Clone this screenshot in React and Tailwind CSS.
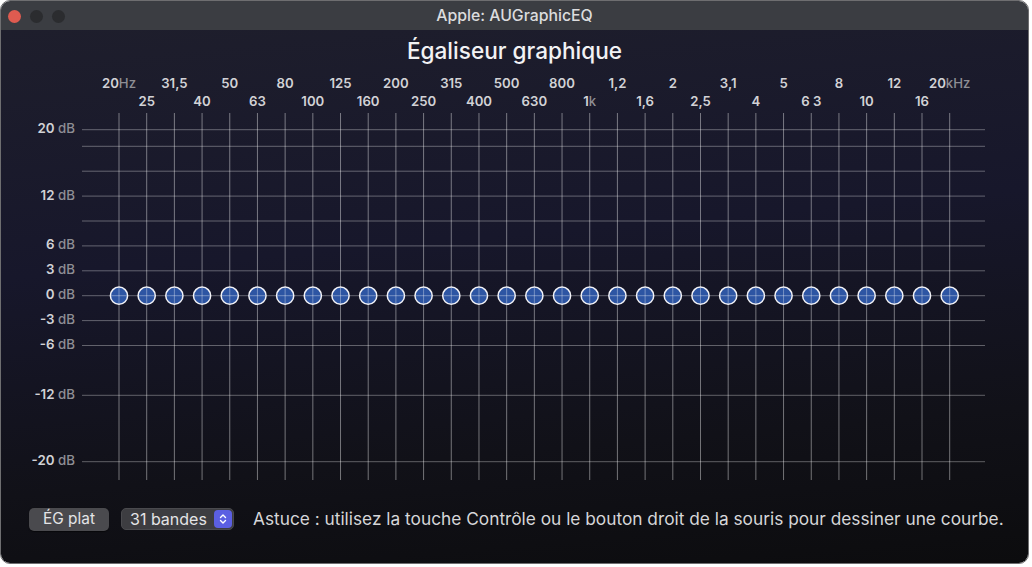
import React from "react";

const FREQS = ["20","25","31,5","40","50","63","80","100","125","160","200","250","315","400","500","630","800","1","1,2","1,6","2","2,5","3,1","4","5","6 3","8","10","12","16","20"];
const DBS = [20, 18, 15, 12, 9, 6, 3, 0, -3, -6, -12, -20];
const LABELED = { 20: "20", 12: "12", 6: "6", 3: "3", 0: "0", "-3": "-3", "-6": "-6", "-12": "-12", "-20": "-20" };

const X0 = 118;
const DX = 27.69;
const OY = 66;
const yOf = (db) => 295.7 - db * 8.3 - OY;

function Graph() {
  const xs = FREQS.map((_, i) => X0 + i * DX);
  return (
    <svg width="1027" height="424" className="block" style={{ fontFamily: "Inter, 'Noto Sans', sans-serif" }}>
      {DBS.map((d) => (
        <line key={"h" + d} x1="81" x2="984" y1={yOf(d)} y2={yOf(d)} stroke="rgba(255,255,255,0.33)" strokeWidth="1" />
      ))}
      {xs.map((x, i) => (
        <line key={"v" + i} x1={x} x2={x} y1="47" y2="414" stroke="rgba(255,255,255,0.42)" strokeWidth="1" />
      ))}
      {FREQS.map((f, i) => {
        const top = i % 2 === 0;
        const unit = i === 0 ? "Hz" : i === 17 ? "k" : i === 30 ? "kHz" : null;
        return (
          <text key={"f" + i} x={xs[i]} y={top ? 22.3 : 39.7} textAnchor="middle" fontSize="13.2" fontWeight="600" fill="#d2d2d6">
            {f}
            {unit && <tspan fill="#8e8e94" fontWeight="500">{unit}</tspan>}
          </text>
        );
      })}
      {DBS.filter((d) => LABELED[d] !== undefined).map((d) => (
        <text key={"d" + d} x="74" y={yOf(d) + 3.4} textAnchor="end" fontSize="13.3" fontWeight="600" fill="#d2d2d6">
          {LABELED[d]}
          <tspan fill="#8e8e94" fontWeight="500">{" dB"}</tspan>
        </text>
      ))}
      {xs.map((x, i) => (
        <g key={"k" + i}>
          <circle cx={x} cy={yOf(0)} r="8.6" fill="#2d55a3" stroke="#f2f2f6" strokeWidth="1.5" />
          <line x1={x - 7.8} x2={x + 7.8} y1={yOf(0)} y2={yOf(0)} stroke="rgba(255,255,255,0.35)" strokeWidth="1" />
          <line x1={x} x2={x} y1={yOf(0) - 7.8} y2={yOf(0) + 7.8} stroke="rgba(255,255,255,0.35)" strokeWidth="1" />
        </g>
      ))}
    </svg>
  );
}

export default function App() {
  return (
    <div className="w-[1032px] h-[567px] bg-white" style={{ fontFamily: "Inter, 'Noto Sans', sans-serif" }}>
      <div className="w-[1029px] h-[564px] rounded-[10px] border border-[#6e6e70] overflow-hidden flex flex-col">
        <div className="h-[29px] bg-[#3b3d42] relative flex items-center justify-center shrink-0">
          <div className="absolute left-[7px] top-[9px] flex gap-[9px]">
            <span className="w-[13px] h-[13px] rounded-full bg-[#df5b50]" />
            <span className="w-[13px] h-[13px] rounded-full bg-[#2b2c2f]" />
            <span className="w-[13px] h-[13px] rounded-full bg-[#2b2c2f]" />
          </div>
          <span className="text-[15.8px] text-[#dcdcde] font-medium">Apple: AUGraphicEQ</span>
        </div>
        <div className="flex-1 flex flex-col bg-[linear-gradient(175deg,#1e1e2c_0%,#17172b_40%,#111118_75%,#0c0c0e_100%)]">
          <div className="pt-[6px] h-[36px] leading-[30px] text-center text-[22.6px] font-medium text-[#f2f2f4]">Égaliseur graphique</div>
          <Graph />
          <div className="mt-[17px] h-[24px] flex items-center pl-[28px]">
            <div className="w-[80px] h-[23px] rounded-[5px] bg-[#4a4a4e] flex items-center justify-center text-[15.4px] text-[#e4e4e6] shadow-[0_0.5px_1px_rgba(0,0,0,0.5)]">ÉG plat</div>
            <div className="ml-[12px] w-[113px] h-[22px] rounded-[5px] bg-[#3d3d41] border border-[#4a4a4e] flex items-center justify-between pl-[8px] pr-[1px] text-[16px] text-[#e4e4e6]">
              <span>31 bandes</span>
              <span className="w-[18px] h-[18px] rounded-[4px] bg-[#5b5fe2] flex items-center justify-center">
                <svg width="8" height="12" viewBox="0 0 8 12" fill="none" stroke="white" strokeWidth="1.4" strokeLinecap="round" strokeLinejoin="round">
                  <path d="M1.5 4.5 L4 2 L6.5 4.5" />
                  <path d="M1.5 7.5 L4 10 L6.5 7.5" />
                </svg>
              </span>
            </div>
            <div className="ml-[19px] text-[17.3px] text-[#d6d6d8] whitespace-nowrap">Astuce : utilisez la touche Contrôle ou le bouton droit de la souris pour dessiner une courbe.</div>
          </div>
        </div>
      </div>
    </div>
  );
}
